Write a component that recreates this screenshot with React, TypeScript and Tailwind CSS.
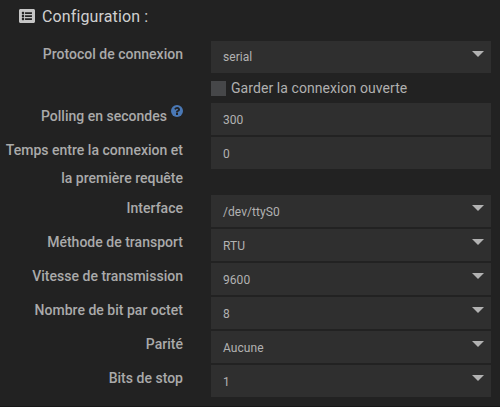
import type { ReactNode } from "react";
import { FaListAlt } from "react-icons/fa";

function Label({ children }: { children?: ReactNode }) {
  return (
    <div className="-mt-px w-[183px] shrink-0 text-right text-[14px] font-medium leading-7 tracking-[0.015px] text-[#aaaaaa]">
      {children}
    </div>
  );
}

function Row({ label, children }: { label?: ReactNode; children: ReactNode }) {
  return (
    <div className="flex items-start gap-7">
      <Label>{label}</Label>
      {children}
    </div>
  );
}

function Field({ value, select = false, first = false }: { value: string; select?: boolean; first?: boolean }) {
  return (
    <div className="flex h-8 w-[280px] items-start justify-between bg-[#2f2f2f] pl-3 pr-[7px] text-[12px] leading-8 tracking-[0.06px] text-[#b2b2b2]">
      <span className={first ? "pt-0" : "pt-px"}>{value}</span>
      {select && (
        <svg className="mt-[10px] h-[6px] w-3" viewBox="0 0 12 6" fill="#b2b2b2">
          <path d="M0 0h12L6 6z" />
        </svg>
      )}
    </div>
  );
}

function HelpIcon() {
  return (
    <svg className="relative -top-1 ml-1 inline-block h-3 w-3 align-baseline" viewBox="0 0 1536 1536">
      <circle cx="768" cy="768" r="768" fill="#4a78b5" />
      <path
        d="M896 1248v-192q0-14-9-23t-23-9H672q-14 0-23 9t-9 23v192q0 14 9 23t23 9h192q14 0 23-9t9-23zm256-672q0-88-55.500-163T958 297t-170-41q-243 0-371 213-15 24 8 42l132 100q7 6 19 6 16 0 25-12 53-68 86-92 34-24 86-24 48 0 85.500 26t37.500 59q0 38-20 61t-68 45q-63 28-115.500 86.500T640 892v36q0 14 9 23t23 9h192q14 0 23-9t9-23q0-19 21.500-49.500T972 829q32-18 49-28.500t46-35 44.500-48 28-60.500 12.500-81z"
        fill="#222222"
      />
    </svg>
  );
}

export default function App() {
  return (
    <main className="h-[407px] w-[500px] overflow-hidden border-b border-[#171717] bg-[#222222] font-['Roboto',sans-serif]">
      <h3 className="flex h-[41px] items-start gap-[7px] pl-[19px] pt-2 text-[16px] leading-[18px] tracking-[0.13px] text-[#d0d0d0]">
        <FaListAlt className="h-4 w-4 text-[#c6c6c6]" />
        <span>Configuration :</span>
      </h3>
      <form className="flex flex-col gap-[2px]">
        <Row label="Protocol de connexion"><Field value="serial" select first /></Row>
        <div className="flex h-[26px] items-center gap-[5px] pl-[211px] text-[14px] leading-[26px] tracking-[0.07px] text-[#b0b0b0]">
          <span className="mt-px h-[15px] w-[15px] bg-[#464749]" />
          <span>Garder la connexion ouverte</span>
        </div>
        <Row label={<>Polling en secondes<HelpIcon /></>}><Field value="300" /></Row>
        <Row label={<>Temps entre la connexion et<br />la première requête<span className="block h-px" /></>}><Field value="0" /></Row>
        <Row label="Interface"><Field value="/dev/ttyS0" select /></Row>
        <Row label="Méthode de transport"><Field value="RTU" select /></Row>
        <Row label="Vitesse de transmission"><Field value="9600" select /></Row>
        <Row label="Nombre de bit par octet"><Field value="8" select /></Row>
        <Row label="Parité"><Field value="Aucune" select /></Row>
        <Row label="Bits de stop"><Field value="1" select /></Row>
      </form>
    </main>
  );
}
